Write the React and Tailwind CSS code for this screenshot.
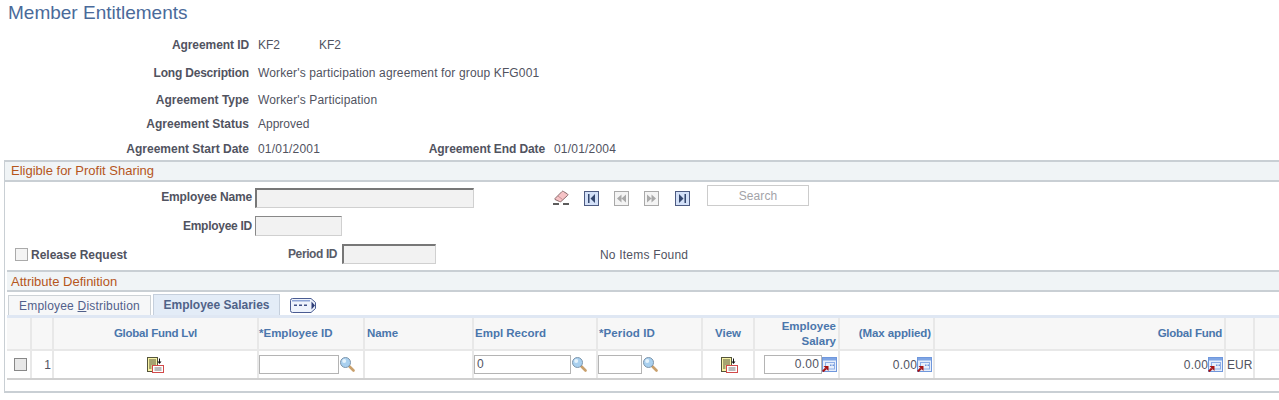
import React from "react";

const Label = ({ children, w = "w-[249px]", className = "" }) => (
  <div className={`${w} shrink-0 text-right font-bold text-[#51535f] ${className}`}>{children}</div>
);

const Row = ({ h, label, labelClass, children }) => (
  <div className={`flex items-center ${h}`}>
    <Label className={labelClass}>{label}</Label>
    <div className="ml-[9px] flex items-center text-[#51535f]">{children}</div>
  </div>
);

const Field = ({ className, dark = true }) => (
  <div className={`${className} shrink-0 bg-[#f2f2f2] border border-[#d0d0d0] ${dark ? "border-t-[#777] border-l-[#777] border-l-2 border-t-2" : "border-t-[#888] border-l-[#888]"}`} />
);

const Input = ({ className, value, right }) => (
  <div className={`${className} shrink-0 h-[19px] bg-white border border-[#b4b4b4] px-[2px] text-[12px] leading-[17px] text-[#51535f] ${right ? "text-right tracking-[0.2px]" : ""}`}>{value}</div>
);

const NavIcon = ({ kind, on }) => {
  const stroke = on ? "#4d5b82" : "#a9a9a9";
  const fill = on ? "#d3e0f7" : "#f4f4f4";
  const ink = on ? "#33466e" : "#a9a9a9";
  return (
    <svg width="15" height="15" viewBox="0 0 15 15" className="shrink-0">
      <rect x="0.5" y="0.5" width="14" height="14" fill={fill} stroke={stroke} />
      {kind === "first" && <path d="M4 3h1.5v9H4zM11 3v9L6.5 7.5z" fill={ink} />}
      {kind === "prev" && <path d="M7.5 3.5v8L3 7.5zM12 3.5v8L7.5 7.5z" fill={ink} />}
      {kind === "next" && <path d="M3 3.5v8L7.5 7.5zM7.5 3.5v8L12 7.5z" fill={ink} />}
      {kind === "last" && <path d="M4 3v9l4.5-4.5zM9.5 3H11v9H9.5z" fill={ink} />}
    </svg>
  );
};

const Eraser = () => (
  <svg width="17" height="15" viewBox="0 0 17 15" className="shrink-0">
    <path d="M2 8.5 9 1.5c.5-.5 1-.5 1.5 0l4 2.5c.5.4.5 1 0 1.5L8 11.5c-.5.4-1 .4-1.500 0L2 9.500z" fill="#f6c3c6" stroke="#8a6a6c" />
    <path d="M5 6l4.500 3.500" fill="none" stroke="#c58f92" />
    <rect x="0" y="13" width="6" height="2" fill="#5c5c5c" />
    <rect x="10" y="13" width="6" height="2" fill="#5c5c5c" />
  </svg>
);

const Lens = () => (
  <svg width="15" height="15" viewBox="0 0 15 15" className="shrink-0">
    <path d="M9.500 9.500 13.500 13.500" stroke="#c9a06c" strokeWidth="2.600" strokeLinecap="round" />
    <circle cx="5.500" cy="5.500" r="5" fill="#a9d0ef" stroke="#7d95ab" />
    <circle cx="4.200" cy="4" r="2" fill="#e5f3fc" />
  </svg>
);

const DocIcon = () => (
  <svg width="17" height="16" viewBox="0 0 17 16" className="shrink-0">
    <rect x="0.500" y="0.500" width="10" height="14" fill="#f8f3a6" stroke="#55553a" />
    <path d="M2 3h7M2 5h7M2 7h7M2 9h2.500M2 11h2.500" stroke="#55553a" />
    <path d="M12.500 1.500v3.500" stroke="#111" />
    <path d="M10.500 4.500h4l-2 2.500z" fill="#111" />
    <rect x="5.500" y="8.500" width="11" height="7" fill="#fff" stroke="#d24a4a" />
    <path d="M7.500 11h7M7.500 13h7" stroke="#777" />
  </svg>
);

const CalcIcon = () => (
  <svg width="15" height="15" viewBox="0 0 15 15" className="shrink-0">
    <rect x="0.500" y="0.500" width="14" height="14" fill="#e6eefb" stroke="#6f97dc" />
    <rect x="1" y="1" width="13" height="2.500" fill="#7fa5e4" />
    <rect x="3.500" y="5.500" width="9" height="6.500" fill="none" stroke="#8eaee6" />
    <path d="M8 7.500h1.500V9H8zM10.500 7.500H12V9h-1.500z" fill="#6f97dc" />
    <path d="M0.800 14.500 3.800 11.500" stroke="#a81212" strokeWidth="2" />
    <path d="M1.500 9h5v5z" fill="#a81212" />
  </svg>
);

const ShowAll = () => (
  <svg width="27" height="15" viewBox="0 0 27 15" className="shrink-0">
    <path d="M2.500.500h18.500l4.500 4v6l-4.500 4H2.500a2 2 0 0 1-2-2v-10a2 2 0 0 1 2-2z" fill="#eef3fc" stroke="#4a5c92" />
    <path d="M2 2h18v1.500H2z" fill="#8ea4d6" />
    <path d="M21.500 3.500v8l3.500-4z" fill="#2f3f78" />
    <path d="M4 6.500h3V8H4zM9 6.500h3V8H9zM14 6.500h3V8h-3z" fill="#3e4f85" />
  </svg>
);

const HeadCell = ({ className = "", children }) => (
  <div className={`flex items-center font-bold text-[11.5px] leading-[15px] text-[#4a76ac] border-r-2 border-[#e8e8e8] ${className}`}>{children}</div>
);
const Cell = ({ className = "", children }) => (
  <div className={`flex items-center border-r-2 border-[#e8e8e8] text-[#51535f] ${className}`}>{children}</div>
);

const COLS = "grid grid-cols-[25px_22px_205px_106px_109px_124px_105px_52px_85px_95px_291px_29px_1fr]";

export default function App() {
  return (
    <div className="w-[1279px] h-[400px] overflow-hidden bg-white text-[12px] font-['Liberation_Sans',Arial,sans-serif]">
      <h1 className="h-[31px] pl-[8px] pt-[1px] text-[19px] leading-[24px] font-normal text-[#4a6a9a]">Member Entitlements</h1>

      <div className="pt-[2px]">
        <Row h="h-[24px]" label="Agreement ID" labelClass="tracking-[-0.08px]"><span className="w-[61px]">KF2</span><span>KF2</span></Row>
        <div className="h-[4px]" />
        <Row h="h-[24px]" label="Long Description" labelClass="tracking-[-0.2px]"><span className="tracking-[0.13px]">Worker's participation agreement for group KFG001</span></Row>
        <div className="h-[3px]" />
        <Row h="h-[24px]" label="Agreement Type"><span className="tracking-[0.14px]">Worker's Participation</span></Row>
        <Row h="h-[24px]" label="Agreement Status">Approved</Row>
        <div className="flex items-center h-[24px] pt-[1px]">
          <Label>Agreement Start Date</Label>
          <span className="ml-[9px] w-[103px] text-[#51535f] tracking-[0.2px]">01/01/2001</span>
          <Label w="w-[184px]" className="tracking-[-0.1px]">Agreement End Date</Label>
          <span className="ml-[9px] text-[#51535f] tracking-[0.2px]">01/01/2004</span>
        </div>
      </div>

      <section className="ml-[4px] h-[233px] border-l border-b-2 border-[#c9cfd4]">
        <div className="h-[22px] border-y-2 border-[#c9cfd4] bg-[#f0f4f6] pl-[6px] text-[13px] leading-[17px] text-[#b5561c]">Eligible for Profit Sharing</div>

        <div className="flex h-[31px]">
          <div className="flex w-[470px] shrink-0 items-center pt-[1px]">
            <div className="mb-[2px] w-[247px] shrink-0 text-right font-bold text-[#51535f] tracking-[-0.15px]">Employee Name</div>
            <Field className="ml-[3px] h-[20px] w-[219px]" />
          </div>
          <div className="flex items-start pt-[3px]">
            <div className="ml-[78px] mt-[5px]"><Eraser /></div>
            <div className="ml-[14px] mt-[6px]"><NavIcon kind="first" on /></div>
            <div className="ml-[15px] mt-[6px]"><NavIcon kind="prev" /></div>
            <div className="ml-[15px] mt-[6px]"><NavIcon kind="next" /></div>
            <div className="ml-[16px] mt-[6px]"><NavIcon kind="last" on /></div>
            <div className="ml-[17px] flex h-[21px] w-[102px] items-center justify-center border border-[#cccccc] text-[#a3a3a8] tracking-[0.1px]">Search</div>
          </div>
        </div>

        <div className="flex h-[26px] items-center">
          <div className="w-[247px] shrink-0 text-right font-bold text-[#51535f] tracking-[-0.27px]">Employee ID</div>
          <Field className="ml-[3px] h-[20px] w-[87px]" dark={false} />
        </div>

        <div className="flex h-[31px] items-center pb-[1px]">
          <div className="ml-[10px] mt-[1px] h-[13px] w-[13px] shrink-0 border border-[#aaaaaa] bg-[#f4f4f4]" />
          <span className="ml-[3px] mt-[2px] w-[97px] font-bold text-[#51535f]">Release Request</span>
          <span className="ml-[160px] w-[54px] whitespace-nowrap font-bold text-[#5a5c68] tracking-[-0.4px]">Period ID</span>
          <Field className="h-[20px] w-[94px]" />
          <span className="ml-[164px] mt-[2px] text-[#51535f] tracking-[0.2px]">No Items Found</span>
        </div>

        <div className="ml-[2px]">
          <div className="h-[22px] border-y-2 border-[#c9cfd4] bg-[#f0f4f6] pl-[4px] text-[13px] leading-[20px] text-[#b5561c]">Attribute Definition</div>
          <div className="flex h-[23px] items-end pl-[1px]">
            <div className="flex h-[20px] w-[143px] items-center justify-center border border-b-0 border-[#cdd2d6] bg-[#f6f7f8] text-[#51608a] tracking-[0.2px]">Employee&nbsp;<u>D</u>istribution</div>
            <div className="ml-[2px] flex h-[21px] w-[127px] items-center justify-center border border-b-0 border-[#c5cfdc] bg-[#e3ecf7] font-bold text-[#4f6288]">Employee Salaries</div>
            <div className="mb-[2px] ml-[10px]"><ShowAll /></div>
          </div>
          <div className="h-[3px] bg-[#dfe7f3]" />
          <div className={`${COLS} h-[33px] bg-[#f7f7f7] border-b-2 border-[#e8e8e8]`}>
            <HeadCell />
            <HeadCell />
            <HeadCell className="justify-center tracking-[-0.25px]">Global Fund Lvl</HeadCell>
            <HeadCell>*Employee ID</HeadCell>
            <HeadCell className="pl-[2px] tracking-[-0.1px]">Name</HeadCell>
            <HeadCell className="pl-[1px]">Empl Record</HeadCell>
            <HeadCell className="pl-[1px] tracking-[0.1px]">*Period ID</HeadCell>
            <HeadCell className="justify-center">View</HeadCell>
            <HeadCell className="justify-end pr-[2px] text-right">Employee<br />Salary</HeadCell>
            <HeadCell className="justify-end pr-[2px] tracking-[-0.1px]">(Max applied)</HeadCell>
            <HeadCell className="justify-end pr-[2px] tracking-[-0.25px]">Global Fund</HeadCell>
            <HeadCell />
            <div />
          </div>
          <div className={`${COLS} h-[29px] border-b-2 border-[#d0d0d0]`}>
            <Cell className="pl-[7px]"><div className="h-[13px] w-[13px] border border-[#888] bg-[#e8e8e8]" /></Cell>
            <Cell className="justify-end pr-[1px]">1</Cell>
            <Cell className="justify-center"><DocIcon /></Cell>
            <Cell><Input className="w-[80px]" /><span className="ml-[1px]"><Lens /></span></Cell>
            <Cell />
            <Cell><Input className="w-[97px]" value="0" /><span className="ml-[1px]"><Lens /></span></Cell>
            <Cell><Input className="w-[44px]" /><span className="ml-[1px]"><Lens /></span></Cell>
            <Cell className="justify-center pl-[2px]"><DocIcon /></Cell>
            <Cell className="justify-end pr-[1px]"><Input className="w-[58px]" value="0.00" right /><CalcIcon /></Cell>
            <Cell className="justify-end pr-[1px] tracking-[0.2px]">0.00<CalcIcon /></Cell>
            <Cell className="justify-end pr-[1px] tracking-[0.2px]">0.00<CalcIcon /></Cell>
            <Cell className="pl-[1px] tracking-[0.1px]">EUR</Cell>
            <div />
          </div>
        </div>
      </section>
    </div>
  );
}
